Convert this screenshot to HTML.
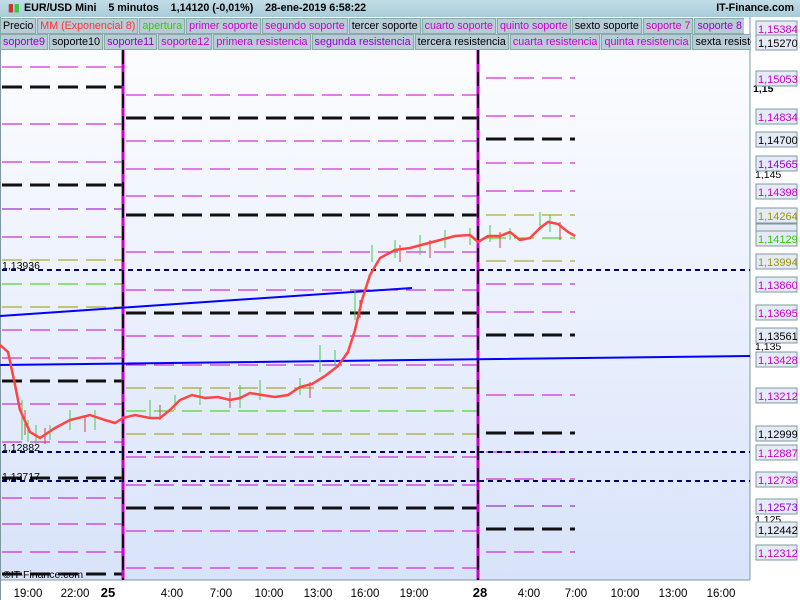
<!DOCTYPE html>
<html><head><meta charset="utf-8"><style>
*{margin:0;padding:0;box-sizing:border-box}
body{width:800px;height:600px;overflow:hidden;font-family:"Liberation Sans",sans-serif;background:#fff;position:relative}
#t{position:absolute;left:0;top:0;width:800px;height:17px;background:linear-gradient(#c2dde6,#a9ccd9);font-size:10.7px;font-weight:bold;line-height:17px}
.row{position:absolute;left:0;height:16px;white-space:nowrap;line-height:14px;background:#c4dde6;overflow:hidden}
.row span{display:inline-block;border:1px solid #8aa;background:#b8ccd6;padding:0 2px;margin-right:1px;height:16px}
svg{position:absolute;left:0;top:0}
</style></head><body>
<svg width="800" height="600" font-family="Liberation Sans" font-size="10.5">
<defs><linearGradient id="bg" x1="0" y1="0" x2="0" y2="1"><stop offset="0" stop-color="#ffffff"/><stop offset="1" stop-color="#d8e3fa"/></linearGradient></defs>
<rect x="0" y="0" width="750" height="580" fill="url(#bg)"/>
<rect x="750" y="0" width="50" height="600" fill="#fff"/>
<rect x="0" y="580" width="800" height="20" fill="#fff"/>
<line x1="750" y1="0" x2="750" y2="580" stroke="#7f98a0"/>
<line x1="0" y1="580" x2="750" y2="580" stroke="#7f98a0"/>
<line x1="0.5" y1="0" x2="0.5" y2="600" stroke="#7f98a0"/>
<g fill="none">
<g stroke-dasharray="20,8">
<path stroke="#c0c" d="M2 67H122M2 124H122M2 162H122M2 237H122M2 330H122M2 358H122M2 404H122M2 442H122M2 498H122M2 524H122M2 552H122"/>
<path stroke="#80c" d="M2 209H122"/>
<path stroke="#990" d="M2 260H122M2 307H122"/>
<path stroke="#3c0" d="M2 284H122"/>
<path stroke="#111" stroke-width="3" d="M2 87H122M2 185H122M2 381H122M2 478H122M2 574H122"/>
<path stroke="#c0c" d="M126 95H478M126 141H478M126 169H478M126 196H478M126 252H478M126 290H478M126 336H478M126 365H478M126 457H478M126 485H478M126 531H478M126 568H478"/>
<path stroke="#990" d="M126 388H478M126 434H478"/>
<path stroke="#3c0" d="M126 411H478"/>
<path stroke="#111" stroke-width="3" d="M126 118H478M126 215H478M126 313H478M126 508H478"/>
<path stroke="#c0c" d="M486 78H575M486 116H575M486 163H575M486 191H575M486 284H575M486 312H575M486 395H575M486 452H575M486 479H575M486 552H575"/>
<path stroke="#80c" d="M486 506H575"/>
<path stroke="#990" d="M486 215H575M486 261H575"/>
<path stroke="#3c0" d="M486 238H575"/>
<path stroke="#111" stroke-width="3" d="M486 139H575M486 335H575M486 433H575M486 529H575"/>
</g>
<path stroke="#006" stroke-width="2" stroke-dasharray="5,4" d="M2 270H750M2 452H750M2 481H750"/>
<path stroke="#c0c" stroke-width="3" d="M123 50V580M478 50V580"/>
<path stroke="#111" stroke-width="2" stroke-dasharray="14,8" d="M123 50V580M478 50V580"/>
<path stroke="#00f" stroke-width="2" d="M0 316L412 288M0 365L750 356"/>
<path stroke="#4c4" stroke-width="1" d="M22 400V440M28 420V442M36 425V445M50 425V440M70 410V430M95 410V430M150 400V418M175 395V410M200 388V405M240 385V408M260 380V400M300 378V395M320 345V372M335 350V365M355 290V320M372 245V262M395 240V258M420 235V255M445 230V248M470 228V245M490 225V242M510 228V240M540 212V230M550 215V232"/>
<path stroke="#c44" stroke-width="1" d="M25 410V435M45 428V444M85 415V432M160 405V420M230 392V408M310 382V398M360 300V318M400 245V262M430 240V258M500 232V248M560 222V240"/>
<path stroke="#f44" stroke-width="2.5" d="M0 345L8 352L14 380L20 410L30 432L40 438L55 428L70 420L90 415L105 420L115 423L123 418L135 415L150 418L160 418L170 410L180 400L192 395L205 398L218 397L230 400L240 398L250 393L262 395L275 397L288 395L300 387L312 384L325 376L338 366L348 352L355 330L362 300L370 275L380 258L395 250L410 248L425 244L440 240L455 236L470 235L478 242L488 236L500 236L510 232L520 240L530 238L540 228L548 222L558 224L568 232L575 236"/>
</g>
<g fill="#000">
<text x="2" y="269">1,13936</text><text x="2" y="451">1,12882</text><text x="2" y="480">1,12717</text>
<text x="3" y="578">©IT-Finance.com</text>
<text x="753" y="92" font-weight="bold">1,15</text><text x="755" y="178">1,145</text><text x="755" y="350">1,135</text><text x="755" y="523">1,125</text>
</g>
<g font-size="11.5" fill="#000" text-anchor="middle">
<text x="28" y="597">19:00</text><text x="75" y="597">22:00</text><text x="108" y="597" font-weight="bold" font-size="13">25</text>
<text x="172" y="597">4:00</text><text x="221" y="597">7:00</text><text x="269" y="597">10:00</text><text x="318" y="597">13:00</text><text x="365" y="597">16:00</text><text x="414" y="597">19:00</text>
<text x="480" y="597" font-weight="bold" font-size="13">28</text><text x="529" y="597">4:00</text><text x="576" y="597">7:00</text><text x="625" y="597">10:00</text><text x="673" y="597">13:00</text><text x="721" y="597">16:00</text>
</g>
<g font-size="11">
<g stroke="#7f98a0" fill="#e4ebf6">
<rect x="756" y="21" width="41" height="15"/><rect x="756" y="35" width="41" height="15"/>
<rect x="756" y="71" width="41" height="15"/><rect x="756" y="109" width="41" height="15"/><rect x="756" y="132" width="41" height="15"/><rect x="756" y="156" width="41" height="15"/><rect x="756" y="184" width="41" height="15"/><rect x="756" y="208" width="41" height="15"/><rect x="756" y="224" width="41" height="8"/><rect x="756" y="231" width="41" height="15"/><rect x="756" y="254" width="41" height="15"/><rect x="756" y="277" width="41" height="15"/><rect x="756" y="305" width="41" height="15"/><rect x="756" y="328" width="41" height="15"/><rect x="756" y="352" width="41" height="15"/><rect x="756" y="388" width="41" height="15"/><rect x="756" y="426" width="41" height="15"/><rect x="756" y="445" width="41" height="15"/><rect x="756" y="472" width="41" height="15"/><rect x="756" y="499" width="41" height="15"/><rect x="756" y="522" width="41" height="15"/><rect x="756" y="545" width="41" height="15"/>
</g>
<text x="758" y="33" fill="#c0c">1,15384</text><text x="758" y="47" fill="#000">1,15270</text>
<text x="758" y="83" fill="#c0c">1,15053</text><text x="758" y="121" fill="#c0c">1,14834</text><text x="758" y="144" fill="#000">1,14700</text><text x="758" y="168" fill="#90c">1,14565</text><text x="758" y="196" fill="#c0c">1,14398</text><text x="758" y="220" fill="#990">1,14264</text><text x="758" y="243" fill="#3c0">1,14129</text><text x="758" y="266" fill="#990">1,13994</text><text x="758" y="289" fill="#c0c">1,13860</text><text x="758" y="317" fill="#c0c">1,13695</text><text x="758" y="340" fill="#000">1,13561</text><text x="758" y="364" fill="#c0c">1,13428</text><text x="758" y="400" fill="#c0c">1,13212</text><text x="758" y="438" fill="#000">1,12999</text><text x="758" y="457" fill="#c0c">1,12887</text><text x="758" y="484" fill="#c0c">1,12736</text><text x="758" y="511" fill="#90c">1,12573</text><text x="758" y="534" fill="#000">1,12442</text><text x="758" y="557" fill="#c0c">1,12312</text>
</g>
</svg>
<div id="t"><span style="display:inline-block;width:24px;padding-left:8px;color:#c33">▮<span style="color:#3c3">▮</span></span>EUR/USD Mini &nbsp;&nbsp; 5 minutos &nbsp;&nbsp; 1,14120 (-0,01%) &nbsp;&nbsp; 28-ene-2019 6:58:22<span style="position:absolute;right:6px">IT-Finance.com</span></div>
<div class="row" style="top:18px;width:744px;font-size:10.7px"><span>Precio</span><span style="color:#f33">MM (Exponencial 8)</span><span style="color:#3c0">apertura</span><span style="color:#c0c">primer soporte</span><span style="color:#c0c">segundo soporte</span><span>tercer soporte</span><span style="color:#c0c">cuarto soporte</span><span style="color:#c0c">quinto soporte</span><span>sexto soporte</span><span style="color:#c0c">soporte 7</span><span style="color:#90c">soporte 8</span></div>
<div class="row" style="top:34px;width:751px;font-size:10.8px"><span style="color:#90c">soporte9</span><span>soporte10</span><span style="color:#90c">soporte11</span><span style="color:#c0c">soporte12</span><span style="color:#c0c">primera resistencia</span><span style="color:#90c">segunda resistencia</span><span>tercera resistencia</span><span style="color:#c0c">cuarta resistencia</span><span style="color:#c0c">quinta resistencia</span><span>sexta resistencia</span></div>
</body></html>
